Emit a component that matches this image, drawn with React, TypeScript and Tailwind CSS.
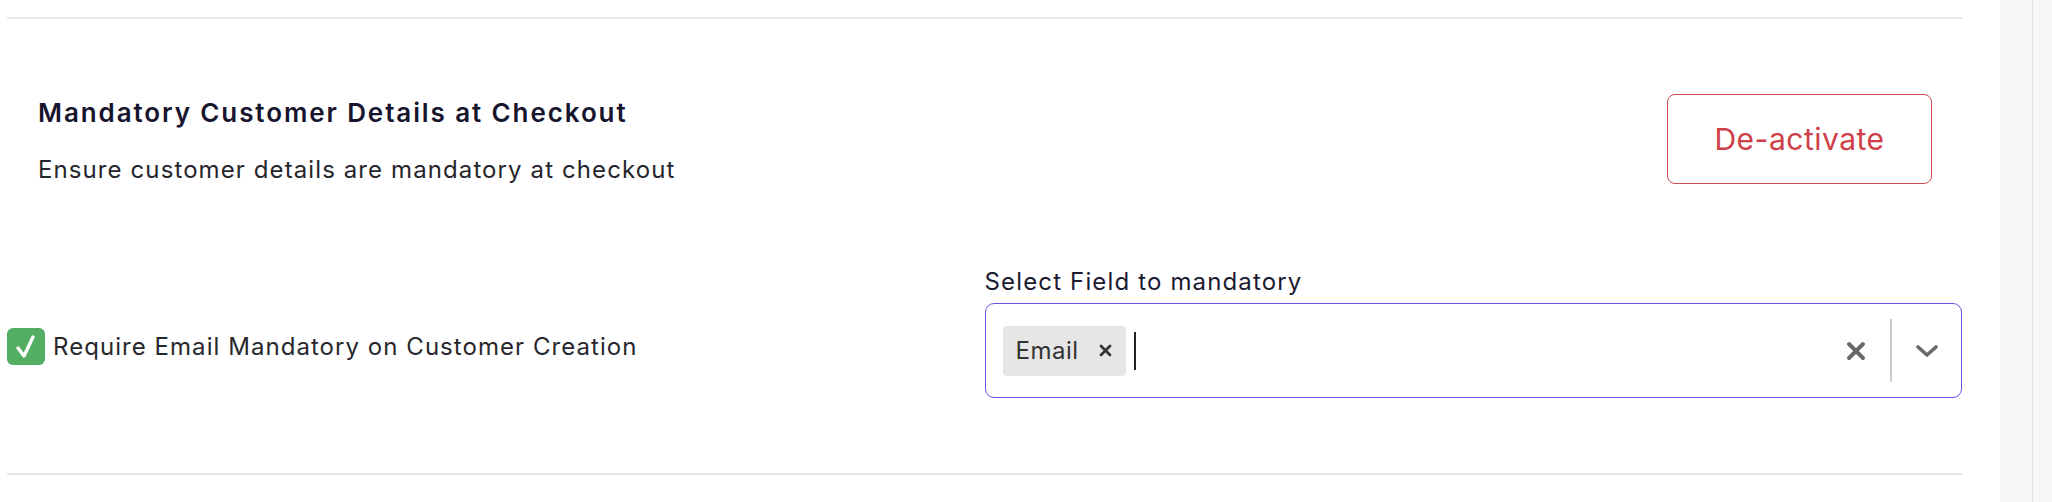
import React from "react";

export default function App() {
  return (
    <div className="flex w-[2052px] h-[502px] bg-white overflow-hidden" style={{ fontFamily: "Inter, 'Noto Sans', sans-serif" }}>
      <div className="flex-1 pl-[7px] pr-[38px]">
        <div className="mt-[17px] h-[2px] bg-[#e8e8e8]" />
        <div className="mt-[75px] h-[90px] flex items-start justify-between pl-[31px] pr-[30px]">
          <div className="flex flex-col mt-[3px]">
            <div className="text-[26px] leading-[32px] font-semibold tracking-[1.9px] text-[#17152e]">
              Mandatory Customer Details at Checkout
            </div>
            <div className="mt-[25px] text-[24px] leading-[32px] tracking-[1.1px] text-[#25252b]">
              Ensure customer details are mandatory at checkout
            </div>
          </div>
          <button className="w-[265px] h-[90px] rounded-[8px] border-[1.5px] border-[#cf4a52] text-[#cf3f48] text-[30px] tracking-[0.5px] bg-white">
            De-activate
          </button>
        </div>
        <div className="grid grid-cols-2 items-end mt-[82px]">
          <div className="flex items-center gap-[8px] mb-[33px]">
            <div className="w-[38px] h-[37px] rounded-[6px] bg-[#53ad63] flex items-center justify-center">
              <svg width="38" height="37" viewBox="0 0 38 37">
                <path d="M11 20 L17 28 L26 9" stroke="#fff" strokeWidth="3.4" strokeLinecap="round" strokeLinejoin="round" fill="none" />
              </svg>
            </div>
            <span className="text-[24px] leading-[32px] tracking-[1.05px] text-[#27272c]">
              Require Email Mandatory on Customer Creation
            </span>
          </div>
          <div className="flex flex-col">
            <label className="text-[24px] leading-[32px] tracking-[1.15px] text-[#1c1a31]">Select Field to mandatory</label>
            <div className="mt-[5px] h-[95px] rounded-[9px] border-[1.5px] border-[#6b4fe3] flex items-center pl-[17px]">
              <div className="flex items-center h-[50px] rounded-[4px] bg-[#e6e6e6] pl-[13px] pr-[14px]">
                <span className="text-[24px] tracking-[0.5px] text-[#333]">Email</span>
                <svg className="ml-[20px]" width="13" height="13" viewBox="0 0 13 13">
                  <path d="M2 2 L11 11 M11 2 L2 11" stroke="#333" strokeWidth="2.8" strokeLinecap="round" />
                </svg>
              </div>
              <div className="ml-[8px] w-[2px] h-[38px] bg-[#222]" />
              <div className="flex-1" />
              <svg width="20" height="20" viewBox="0 0 20 20" className="mr-[24px]">
                <path d="M3 3 L17 17 M17 3 L3 17" stroke="#6a6a6a" strokeWidth="4" strokeLinecap="round" />
              </svg>
              <div className="w-[2px] h-[63px] bg-[#cccccc]" />
              <svg width="24" height="16" viewBox="0 0 24 16" className="ml-[23px] mr-[22px]">
                <path d="M3 4 L12 12 L21 4" stroke="#6a6a6a" strokeWidth="3.6" strokeLinecap="round" strokeLinejoin="round" fill="none" />
              </svg>
            </div>
          </div>
        </div>
        <div className="mt-[75px] h-[2px] bg-[#e5e5e5]" />
      </div>
      <div className="w-[52px] h-full flex bg-[#f7f7f7]">
        <div className="w-[32px]" />
        <div className="w-[1px] h-full bg-[#e0e0e0]" />
      </div>
    </div>
  );
}
